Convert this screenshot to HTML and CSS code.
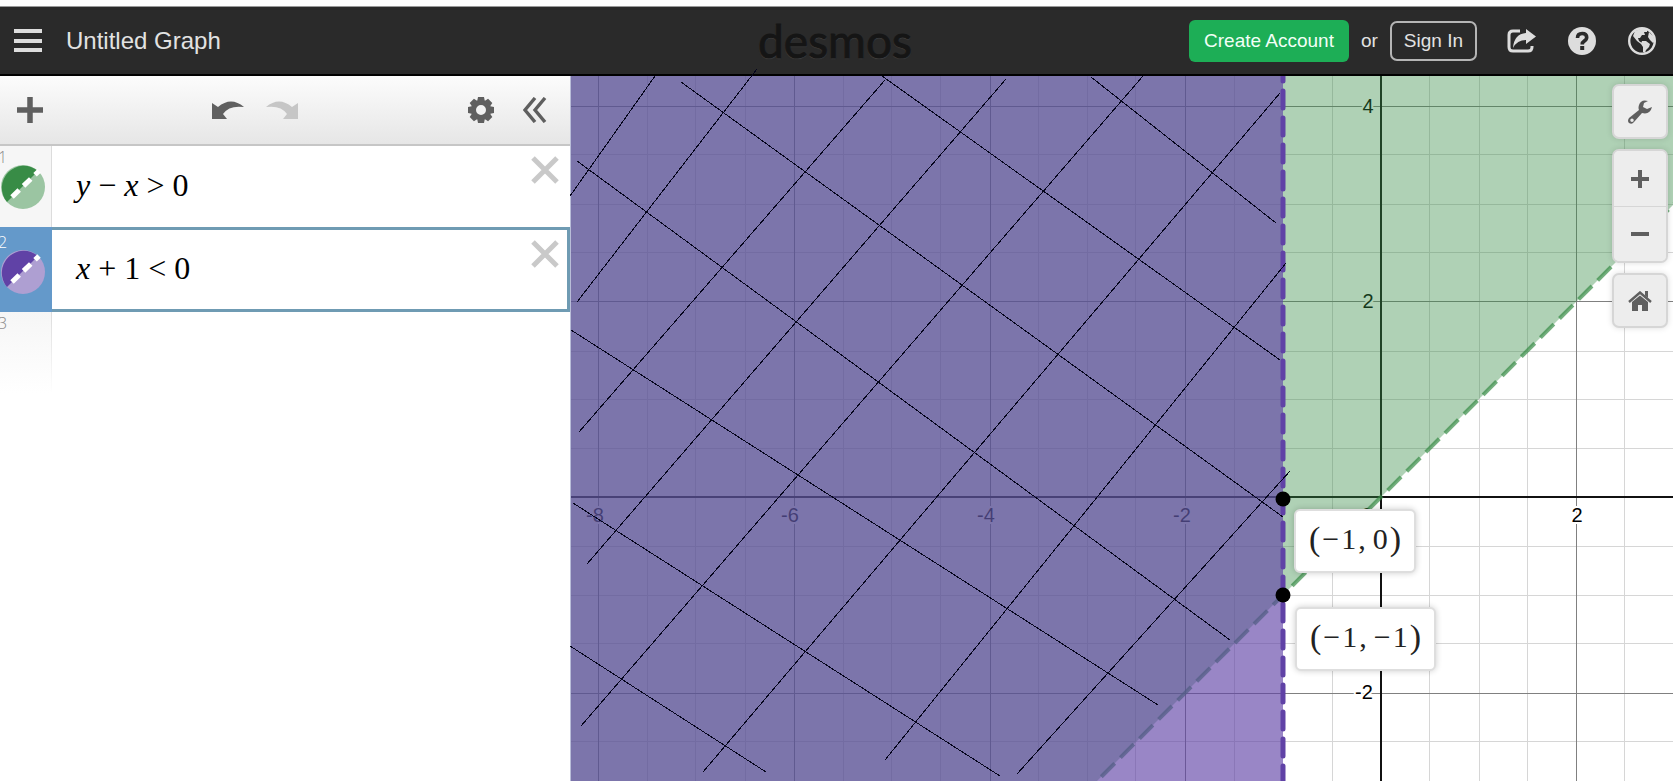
FILE: index.html
```html
<!DOCTYPE html>
<html lang="en">
<head>
<meta charset="utf-8">
<title>Untitled Graph</title>
<link rel="stylesheet" href="styles.css">
</head>
<body>
<header class="topbar">
  <div class="topbar-left">
    <button class="icon-btn" aria-label="Menu">
      <svg width="28" height="24" viewBox="0 0 28 24" fill="#ddd"><rect width="28" height="4"/><rect y="10" width="28" height="4"/><rect y="19" width="28" height="4"/></svg>
    </button>
    <h1 class="title">Untitled Graph</h1>
  </div>
  <div class="logo">desmos</div>
  <div class="topbar-right">
    <button class="btn btn-primary">Create Account</button>
    <span class="or">or</span>
    <button class="btn btn-outline">Sign In</button>
    <div class="top-icons">
      <button class="icon-btn" aria-label="Share">
        <svg width="29" height="26" viewBox="0 0 29 26"><path d="M13 3H6Q2 3 2 7V19Q2 23 6 23H21Q25 23 25 19V18" fill="none" stroke="#ddd" stroke-width="3"/><path d="M19 1 29 8.500 19 16V12Q10 12 6 20Q7 6 19 5Z" fill="#ddd"/></svg>
      </button>
      <button class="icon-btn" aria-label="Help">
        <svg width="28" height="28" viewBox="0 0 28 28"><circle cx="14" cy="14" r="14" fill="#ddd"/><path d="M9.500 11Q9.500 6.500 14.200 6.500Q18.700 6.500 18.700 10.300Q18.700 12.600 16.200 14.100Q14.200 15.300 14.200 17.500" fill="none" stroke="#2a2a2a" stroke-width="3.600"/><rect x="12.200" y="19" width="4" height="4" fill="#2a2a2a"/></svg>
      </button>
      <button class="icon-btn" aria-label="Language">
        <svg width="28" height="28" viewBox="0 0 28 28"><circle cx="14" cy="14" r="12.800" fill="none" stroke="#ddd" stroke-width="2.400"/><path d="M7 4 12 2 19 2 19 5 16 5 17 8 14 8 12 11 10 11 11 14 14 16 13 17 9 14 5 9ZM14 14 18 14 22 17 21 20 18 23 17 26 15 25 15 20 13 17ZM21 5 25 9 27 14 25 16 22 13 20 10Z" fill="#ddd"/></svg>
      </button>
    </div>
  </div>
</header>

<main class="workspace">
  <section class="panel">
    <div class="toolbar">
      <button class="icon-btn" aria-label="Add item">
        <svg width="26" height="26" viewBox="0 0 26 26"><path d="M13 2V24M2 13H24" stroke="#5f5f5f" stroke-width="5.500" stroke-linecap="square"/></svg>
      </button>
      <div class="history">
        <button class="icon-btn" aria-label="Undo">
          <svg width="33" height="20" viewBox="0 0 33 20"><path d="M0 3V19H15L11 14Q17 5 32 7Q19-4 6 7Z" fill="#606060"/></svg>
        </button>
        <button class="icon-btn" aria-label="Redo">
          <svg width="33" height="20" viewBox="0 0 33 20"><path d="M33 3V19H18L22 14Q16 5 1 7Q14-4 27 7Z" fill="#c6c6c6"/></svg>
        </button>
      </div>
      <div class="tools">
        <button class="icon-btn" aria-label="Edit list">
          <svg width="26" height="26" viewBox="-13 -13 26 26"><circle r="7.500" fill="none" stroke="#5f5f5f" stroke-width="5"/><g fill="#5f5f5f"><path id="tooth" d="M-3-13H3L4-8H-4ZM-3 13H3L4 8H-4ZM-13-3V3L-8 4V-4ZM13-3V3L8 4V-4Z"/><use href="#tooth" transform="rotate(45)"/></g></svg>
        </button>
        <button class="icon-btn" aria-label="Hide list">
          <svg width="24" height="26" viewBox="0 0 24 26"><path d="M12 1 2 13 12 25M22 1 12 13 22 25" fill="none" stroke="#5f5f5f" stroke-width="3.400"/></svg>
        </button>
      </div>
    </div>
    <ol class="expressions">
      <li class="row">
        <div class="gutter"><span class="num">1</span>
          <button class="swatch" aria-label="Style of expression 1"><svg width="44" height="44" viewBox="0 0 44 44"><circle cx="22" cy="22" r="22" fill="#9bc5a2"/><path d="M6 37A22 22 0 0 1 37 6Z" fill="#388c46"/><path d="M11 32 38 6" stroke="#fff" stroke-width="5" stroke-dasharray="10 6"/></svg></button>
        </div>
        <div class="math" role="textbox" tabindex="0" aria-label="Expression 1"><i>y</i><span>−</span><i>x</i><span>&gt;</span><span>0</span></div>
        <button class="remove" aria-label="Delete expression 1"><svg width="28" height="28" viewBox="0 0 28 28"><path d="M2 2 26 26M26 2 2 26" stroke="#c9c9c9" stroke-width="5"/></svg></button>
      </li>
      <li class="row selected">
        <div class="gutter"><span class="num">2</span>
          <button class="swatch" aria-label="Style of expression 2"><svg width="44" height="44" viewBox="0 0 44 44"><circle cx="22" cy="22" r="22" fill="#ae9fd2"/><path d="M6 37A22 22 0 0 1 37 6Z" fill="#6042a6"/><path d="M11 32 38 6" stroke="#fff" stroke-width="5" stroke-dasharray="10 6"/></svg></button>
        </div>
        <div class="math" role="textbox" tabindex="0" aria-label="Expression 2"><i>x</i><span>+</span><span>1</span><span>&lt;</span><span>0</span></div>
        <button class="remove" aria-label="Delete expression 2"><svg width="28" height="28" viewBox="0 0 28 28"><path d="M2 2 26 26M26 2 2 26" stroke="#c9c9c9" stroke-width="5"/></svg></button>
      </li>
      <li class="row empty"><div class="gutter"><span class="num">3</span></div></li>
    </ol>
  </section>

  <section class="graph" aria-label="Graph">
    <svg class="plot" width="100%" height="100%">
      <g transform="translate(-571 -76)">
        <g shape-rendering="crispEdges" fill="none">
          <path class="minor" d="M647.500 76V4000M695.500 76V4000M745.500 76V4000M843.500 76V4000M891.500 76V4000M940.500 76V4000M1038.500 76V4000M1087.500 76V4000M1135.500 76V4000M1234.500 76V4000M1332.500 76V4000M1429.500 76V4000M1479.500 76V4000M1527.500 76V4000M1624.500 76V4000M571 154.500H4000M571 204.500H4000M571 252.500H4000M571 351.500H4000M571 399.500H4000M571 448.500H4000M571 546.500H4000M571 595.500H4000M571 643.500H4000M571 741.500H4000"/>
          <path class="major" d="M598.500 76V4000M794.500 76V4000M990.500 76V4000M1185.500 76V4000M1576.500 76V4000M571 106.500H4000M571 301.500H4000M571 693.500H4000"/>
          <path class="axis" d="M1381 76V4000M571 497H4000"/>
        </g>
        <g class="ticks">
          <text x="595" y="522">-8</text><text x="790" y="522">-6</text><text x="986" y="522">-4</text><text x="1182" y="522">-2</text><text x="1577" y="522">2</text>
          <text x="1368" y="113">4</text><text x="1368" y="308">2</text><text x="1364" y="699">-2</text><text x="1367" y="522">0</text>
        </g>
        <path d="M571 76H1802L571 1307Z" fill="#388c46" fill-opacity=".4"/>
        <path d="M1044 834 1802 76" stroke="#388c46" stroke-opacity=".7" stroke-width="4" stroke-dasharray="19 8" fill="none"/>
        <path d="M571 76H1283V4000H571Z" fill="#6042a6" fill-opacity=".64"/>
        <path d="M1283 64V4000" stroke="#6042a6" stroke-width="5" stroke-linecap="round" stroke-dasharray="17 10" fill="none"/>
        <circle cx="1283" cy="499" r="7.500"/><circle cx="1283" cy="595" r="7.500"/>
      </g>
    </svg>
    <svg class="hatch" width="100%" height="100%">
      <path transform="translate(-571 -76)" d="M570 196 655 76M577 302 757 69M579 432 885 80M587 564 1006 79M581 726 1143 76M703 772 1280 93M885 760 1286 263M1017 774 1290 471M1091 77 1276 223M882 76 1280 360M681 82 1283 517M577 161 1230 640M571 330 1158 705M573 503 1000 776M570 646 766 772"/>
    </svg>
    <div class="point-label at-zero"><b>(</b><span>−</span><span>1</span><span class="comma">,</span><span>0</span><b>)</b></div>
    <div class="point-label at-minus-one"><b>(</b><span>−</span><span>1</span><span class="comma">,</span><span>−</span><span>1</span><b>)</b></div>
    <div class="controls">
      <button class="control" aria-label="Graph settings">
        <svg width="24" height="24" viewBox="0 0 24 24"><path fill-rule="evenodd" d="M20 1Q13-1 11 5Q10 8 11 10L1 18Q-1 21 1 23Q4 25 6 22L14 13Q22 15 24 7L19 9 15 7 16 3ZM4 18.500A1.700 1.700 0 1 1 4 22A1.700 1.700 0 1 1 4 18.500Z" fill="#5f5f5f"/></svg>
      </button>
      <div class="zoom">
        <button class="control" aria-label="Zoom in"><svg width="18" height="18" viewBox="0 0 18 18"><path d="M9 0V18M0 9H18" stroke="#5f5f5f" stroke-width="4"/></svg></button>
        <button class="control" aria-label="Zoom out"><svg width="18" height="18" viewBox="0 0 18 18"><path d="M0 9H18" stroke="#5f5f5f" stroke-width="4"/></svg></button>
      </div>
      <button class="control" aria-label="Default view">
        <svg width="24" height="20" viewBox="0 0 24 20"><path d="M1 11 12 1.500 23 11" fill="none" stroke="#5f5f5f" stroke-width="2.400"/><path d="M17 0H20V7L17 4.500ZM4 11 12 4.500 20 11V20H14V14H10V20H4Z" fill="#5f5f5f"/></svg>
      </button>
    </div>
  </section>
</main>
</body>
</html>
```
FILE: styles.css
```css
* { box-sizing: border-box; }
body {
  margin: 0;
  padding-top: 6px;
  height: 100vh;
  display: flex;
  flex-direction: column;
  background: #fff;
  font-family: "Liberation Sans", Arial, sans-serif;
  overflow: hidden;
}
button { font: inherit; cursor: pointer; }
svg { display: block; }
.icon-btn { padding: 0; border: 0; background: none; }

.topbar {
  flex: none;
  display: grid;
  grid-template-columns: 1fr auto 1fr;
  align-items: center;
  height: 70px;
  padding: 0 17px 0 14px;
  background: #2a2a2a;
  border-top: 1px solid #999;
  border-bottom: 2px solid #000;
  color: #e2e2e2;
}
.topbar-left { display: flex; align-items: center; gap: 24px; }
.title { margin: 0; font-size: 24px; font-weight: 400; line-height: 28px; }
.logo {
  font-family: Lato, sans-serif;
  font-size: 46px;
  line-height: 56px;
  color: #151515;
  -webkit-text-stroke: 1px #151515;
  text-shadow: 0 1px 1px #484848;
}
.topbar-right { display: flex; align-items: center; justify-content: flex-end; }
.btn {
  height: 42px;
  padding: 0 15px;
  border: 0;
  border-radius: 6px;
  font-size: 19px;
  color: #f2fff6;
}
.btn-primary { background: #1dae56; }
.btn-outline {
  height: 40px;
  padding: 0 12px;
  border: 2px solid #b5b5b5;
  border-radius: 7px;
  background: none;
  color: #e2e2e2;
}
.or { margin: 0 12px; font-size: 19px; }
.top-icons { display: flex; align-items: center; gap: 32px; margin-left: 30px; }

.workspace { flex: 1; display: flex; min-height: 0; }
.panel { flex: none; width: 571px; border-right: 1px solid #b9bdd8; background: #fff; }
.toolbar {
  display: flex;
  align-items: center;
  height: 70px;
  padding: 0 23px 0 17px;
  background: linear-gradient(#fcfcfc, #e6e6e6);
  border-bottom: 2px solid #c6c6c6;
}
.history { display: flex; gap: 20px; margin-left: 169px; }
.tools { display: flex; align-items: center; gap: 29px; margin-left: auto; }

.expressions { margin: 0; padding: 0; list-style: none; }
.row { display: flex; height: 81px; }
.gutter {
  flex: none;
  width: 52px;
  padding: 3px 0 0 1px;
  background: #f6f6f6;
  border-right: 1px solid #dcdcdc;
}
.num {
  display: block;
  margin-left: -3px;
  font: 300 16px/16px "Open Sans", sans-serif;
  color: #888;
}
.swatch { display: block; padding: 0; border: 0; background: none; }
.math {
  flex: 1;
  display: flex;
  align-items: center;
  gap: 8px;
  padding: 0 0 4px 24px;
  font: 32px/40px "Liberation Serif", "Times New Roman", serif;
  color: #000;
}
.remove {
  align-self: flex-start;
  margin: 10px 11px 0 0;
  padding: 0;
  border: 0;
  background: none;
}
.selected { height: 85px; border: 3px solid #6f9bb3; border-left: 0; }
.selected .gutter {
  margin: -3px 0;
  padding-top: 7px;
  background: #6499ca;
  border-color: #6499ca;
}
.selected .num { color: #fff; }
.selected .remove { margin-right: 8px; }
.empty .gutter { background: linear-gradient(#f6f6f6, #fff); border-image: linear-gradient(#dcdcdc, #fff) 1; }

.graph { position: relative; flex: 1; min-width: 0; }
.plot { position: absolute; inset: 0; overflow: hidden; }
.hatch { position: absolute; inset: 0; overflow: visible; pointer-events: none; }
.hatch path { fill: none; stroke: #05051c; stroke-width: 1; shape-rendering: crispEdges; }
.minor { stroke: #d6d6d6; }
.major { stroke: #808080; }
.axis { stroke: #111; stroke-width: 2; }
.ticks { font-size: 20px; text-anchor: middle; fill: #000; stroke: #fff; stroke-width: 4px; paint-order: stroke; }

.point-label {
  position: absolute;
  display: flex;
  align-items: center;
  gap: 2px;
  height: 64px;
  padding: 0 13px 4px;
  border: 2px solid #dedede;
  border-radius: 6px;
  background: #fff;
  box-shadow: 0 0 6px #0003;
  font: 30px/36px "Liberation Serif", "Times New Roman", serif;
  color: #222;
}
.point-label b { font-size: 34px; font-weight: 400; }
.comma { margin-right: 5px; }
.at-zero { left: 723px; top: 433px; }
.at-minus-one { left: 724px; top: 531px; }

.controls { position: absolute; top: 8px; right: 5px; display: flex; flex-direction: column; gap: 10px; }
.control {
  display: grid;
  place-items: center;
  width: 56px;
  height: 55px;
  padding: 0;
  background: #ededed;
  border: 2px solid #d6d6d6;
  border-radius: 7px;
  box-shadow: 0 0 6px #0002;
}
.zoom { border: 2px solid #d6d6d6; border-radius: 7px; background: #ededed; box-shadow: 0 0 6px #0002; overflow: hidden; }
.zoom .control { width: 52px; height: 55px; border: 0; border-radius: 0; box-shadow: none; }
.zoom .control + .control { border-top: 1px solid #d6d6d6; }
```
